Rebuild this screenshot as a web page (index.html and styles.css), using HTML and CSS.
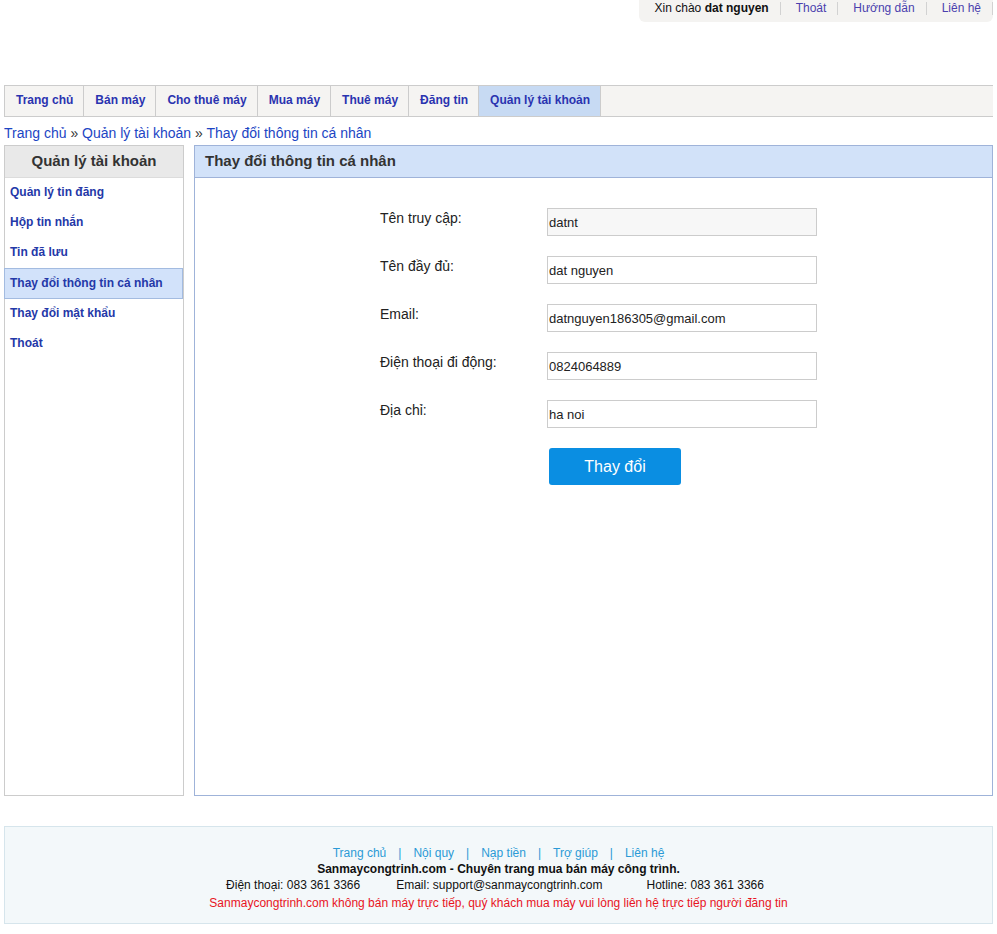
FILE: index.html
```html
<!DOCTYPE html>
<html lang="vi">
<head>
<meta charset="utf-8">
<title>Thay đổi thông tin cá nhân</title>
<link rel="stylesheet" href="styles.css">
</head>
<body>
<div class="page">
  <div class="header">
    <div class="userbar">
      <span class="ub-item ub-first">Xin chào <b>dat nguyen</b></span><span class="sep"></span>
      <a class="ub-item" href="#">Thoát</a><span class="sep"></span>
      <a class="ub-item" href="#">Hướng dẫn</a><span class="sep"></span>
      <a class="ub-item" href="#">Liên hệ</a><span class="sep"></span>
    </div>
  </div>

  <nav class="menu">
    <a class="tab" href="#">Trang chủ</a>
    <a class="tab" href="#">Bán máy</a>
    <a class="tab" href="#">Cho thuê máy</a>
    <a class="tab" href="#">Mua máy</a>
    <a class="tab" href="#">Thuê máy</a>
    <a class="tab" href="#">Đăng tin</a>
    <a class="tab tab-active" href="#">Quản lý tài khoản</a>
  </nav>

  <div class="crumbs">
    <a href="#">Trang chủ</a> » <a href="#">Quản lý tài khoản</a> » <a href="#">Thay đổi thông tin cá nhân</a>
  </div>

  <div class="content">
    <aside class="sidebar">
      <div class="side-head">Quản lý tài khoản</div>
      <a class="side-item" href="#">Quản lý tin đăng</a>
      <a class="side-item" href="#">Hộp tin nhắn</a>
      <a class="side-item" href="#">Tin đã lưu</a>
      <a class="side-item side-active" href="#">Thay đổi thông tin cá nhân</a>
      <a class="side-item" href="#">Thay đổi mật khẩu</a>
      <a class="side-item" href="#">Thoát</a>
    </aside>

    <section class="panel">
      <div class="panel-head">Thay đổi thông tin cá nhân</div>
      <form class="form">
        <label class="lbl">Tên truy cập:</label>
        <input class="inp inp-ro" type="text" value="datnt" readonly>
        <label class="lbl">Tên đầy đủ:</label>
        <input class="inp" type="text" value="dat nguyen">
        <label class="lbl">Email:</label>
        <input class="inp" type="text" value="datnguyen186305@gmail.com">
        <label class="lbl">Điện thoại đi động:</label>
        <input class="inp" type="text" value="0824064889">
        <label class="lbl">Địa chỉ:</label>
        <input class="inp" type="text" value="ha noi">
        <span></span>
        <button class="btn" type="button">Thay đổi</button>
      </form>
    </section>
  </div>

  <footer class="footer">
    <div class="f-links">
      <a href="#">Trang chủ</a><span class="f-sep">|</span><a href="#">Nội quy</a><span class="f-sep">|</span><a href="#">Nạp tiền</a><span class="f-sep">|</span><a href="#">Trợ giúp</a><span class="f-sep">|</span><a href="#">Liên hệ</a>
    </div>
    <div class="f-title">Sanmaycongtrinh.com - Chuyên trang mua bán máy công trình.</div>
    <div class="f-contact">
      <span>Điện thoại: 083 361 3366</span>
      <span>Email: support@sanmaycongtrinh.com</span>
      <span>Hotline: 083 361 3366</span>
    </div>
    <div class="f-note">Sanmaycongtrinh.com không bán máy trực tiếp, quý khách mua máy vui lòng liên hệ trực tiếp người đăng tin</div>
  </footer>
</div>
</body>
</html>
```

FILE: styles.css
```css
* { box-sizing: border-box; }
body {
  margin: 0;
  background: #fff;
  font-family: "Liberation Sans", Arial, sans-serif;
  color: #222;
}
a { text-decoration: none; }
.page { padding: 0 4px; }

.header { height: 85px; display: flex; justify-content: flex-end; align-items: flex-start; }
.userbar {
  background: #f4f3f1;
  height: 22px;
  border-radius: 0 0 6px 6px;
  padding: 0 0 0 1px;
  font-size: 12px;
  line-height: 16px;
  display: flex;
  align-items: flex-start;
}
.ub-item { padding: 0 11px 0 15px; color: #4b3fae; }
.ub-first { color: #111; }
.ub-first b { color: #111; }
.sep { display: inline-block; width: 1px; height: 13px; background: #d2d2d2; margin-top: 2px; }

.menu {
  display: flex;
  height: 32px;
  border: 1px solid #cccccc;
  border-right: none;
  background: #f5f4f2;
}
.tab {
  display: block;
  height: 30px;
  padding: 0 10px 0 11px;
  line-height: 28px;
  font-size: 12px;
  font-weight: bold;
  color: #2a33b0;
  border-right: 1px solid #cccccc;
}
.tab-active { background: #c7daf3; }

.crumbs {
  margin-top: 7px;
  font-size: 14px;
  line-height: 18px;
  color: #333;
  height: 21px;
}
.crumbs a { color: #1c45c4; }

.content { display: flex; gap: 10px; height: 651px; }
.sidebar {
  width: 180px;
  border: 1px solid #cccccc;
  display: flex;
  flex-direction: column;
}
.side-head {
  height: 32px;
  background: #e9e9e9;
  border-bottom: 1px solid #dcdcdc;
  text-align: center;
  font-size: 15px;
  font-weight: bold;
  line-height: 30px;
  color: #333;
}
.side-item {
  display: block;
  height: 30px;
  line-height: 29px;
  padding-left: 5px;
  font-size: 12px;
  font-weight: bold;
  color: #2438a8;
}
.side-active {
  height: 31px;
  line-height: 29px;
  background: #d2e2fa;
  border: 1px solid #a3bbe0;
  margin-left: -1px;
}

.panel {
  flex: 1;
  border: 1px solid #9fb3d9;
}
.panel-head {
  height: 32px;
  background: #d2e2f9;
  border-bottom: 1px solid #9fb3d9;
  padding-left: 10px;
  font-size: 15px;
  font-weight: bold;
  line-height: 30px;
  color: #333;
}
.form {
  display: grid;
  grid-template-columns: 167px 270px;
  row-gap: 20px;
  margin: 30px 0 0 185px;
}
.lbl {
  font-size: 14px;
  line-height: 18px;
  color: #222;
  padding-top: 1px;
}
.inp {
  height: 28px;
  width: 270px;
  border: 1px solid #cccccc;
  padding: 0 1px;
  font-family: "Liberation Sans", Arial, sans-serif;
  font-size: 13px;
  color: #222;
  background: #fff;
  outline: none;
}
.inp-ro { background: #f7f7f7; }
.btn {
  margin-left: 2px;
  width: 132px;
  height: 37px;
  border: none;
  border-radius: 3px;
  background: #0a8ee2;
  color: #fff;
  font-family: "Liberation Sans", Arial, sans-serif;
  font-size: 16px;
}

.footer {
  margin-top: 30px;
  height: 98px;
  border: 1px solid #d6e5ec;
  background: #f3f8fa;
  text-align: center;
  font-size: 12px;
  line-height: 17px;
  padding-top: 18px;
}
.f-links a, .f-sep { color: #2b9ad6; }
.f-sep { padding: 0 12px; }
.f-title { font-weight: bold; color: #111; line-height: 15px; }
.f-contact { color: #111; display: flex; justify-content: center; gap: 36px; padding-right: 7px; }
.f-contact span:last-child { margin-left: 8px; }
.f-note { color: #e8141e; line-height: 19px; }
```
